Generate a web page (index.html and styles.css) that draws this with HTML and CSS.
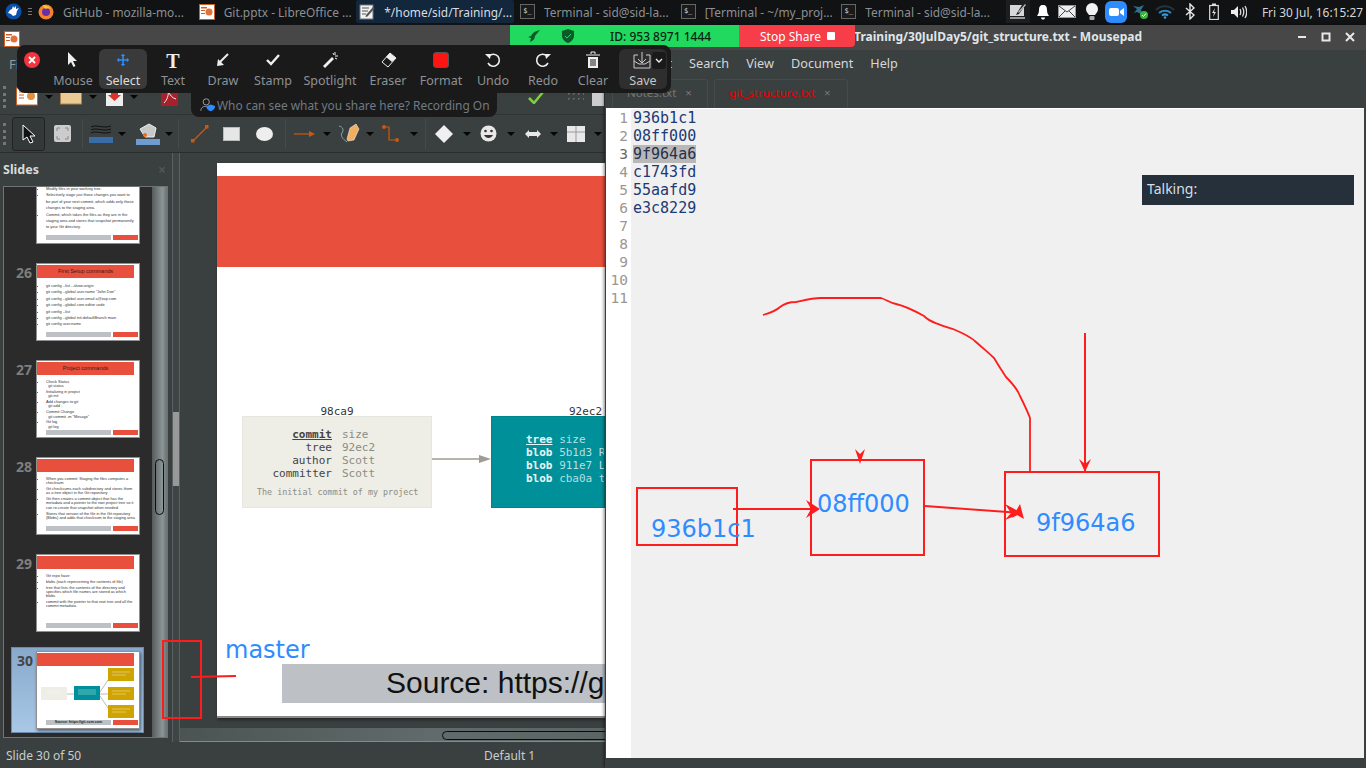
FILE: index.html
```html
<!DOCTYPE html>
<html lang="en">
<head>
  <meta charset="UTF-8">
  <title>Desktop - Git training</title>
  <link rel="stylesheet" href="styles.css">
</head>
<body>
<div class="desktop">

  <!-- top panel -->
  <div class="panel">
    <svg class="start" width="17" height="17" viewBox="0 0 17 17"><circle cx="8.5" cy="8.5" r="8" fill="#0b4fa8"/><path d="M3 10l2-3 2-1 1-3 1 2 2-2 0 3 3-1-2 3-1 4-3 1-2-2z" fill="#fff"/></svg>
    <div class="dots"><i></i><i></i><i></i></div>
    <div class="task">
      <svg width="16" height="17" viewBox="0 0 16 17"><circle cx="8" cy="9" r="7.5" fill="#f5822a"/><circle cx="8" cy="9" r="4" fill="#6a2fa8"/><path d="M5 2c3 0 6 1 8 4-2-1-4-1-5 0-2-1-3-2-3-4z" fill="#fcc32c"/></svg>
      <span>GitHub - mozilla-mo...</span>
    </div>
    <div class="task">
      <svg width="16" height="16" viewBox="0 0 16 16"><rect x="0.5" y="0.5" width="15" height="15" fill="#fff" stroke="#c9602a"/><rect x="2" y="3" width="6" height="1.5" fill="#c9602a"/><rect x="2" y="6" width="4" height="1" fill="#c9602a"/><rect x="2" y="9" width="4" height="1" fill="#c9602a"/><circle cx="10" cy="8" r="3.5" fill="#e2703a"/></svg>
      <span>Git.pptx - LibreOffice ...</span>
    </div>
    <div class="task task-active">
      <svg width="16" height="16" viewBox="0 0 16 16"><rect x="1" y="1" width="13" height="14" fill="#f2f2f2" stroke="#777"/><path d="M3 4h7M3 7h6M3 10h4" stroke="#555"/><path d="M7 11l7-8 1.500 1.500-7 8-2 .5z" fill="#555"/></svg>
      <span>*/home/sid/Training/...</span>
    </div>
    <div class="task"><span class="term-icon">$_</span><span>Terminal - sid@sid-la...</span></div>
    <div class="task"><span class="term-icon">$_</span><span>[Terminal - ~/my_proj...</span></div>
    <div class="task"><span class="term-icon">$_</span><span>Terminal - sid@sid-la...</span></div>
    <div class="tray">
      <div class="tray-item tray-notes"><svg width="18" height="17" viewBox="0 0 18 17"><path d="M1 2h12l-5 8-1 2 3-1 5-7v9H1z" fill="#d8d8d8"/><path d="M9 9l7-8 1 1-7 8z" fill="#bbb"/><rect x="1" y="14" width="15" height="2" fill="#999"/></svg></div>
      <div class="tray-item"><svg width="14" height="16" viewBox="0 0 14 16"><path d="M7 1c3 0 4 2 4 5 0 3 1 4 2 6H1c1-2 2-3 2-6 0-3 1-5 4-5z" fill="#fff"/><path d="M5 13.500h4c0 1.500-1 2-2 2s-2-.5-2-2z" fill="#fff"/></svg></div>
      <div class="tray-item"><svg width="18" height="13" viewBox="0 0 18 13"><rect x="0.500" y="0.500" width="17" height="12" fill="#eee" stroke="#999"/><path d="M1 1l8 6 8-6M1 12l6-6M17 12l-6-6" fill="none" stroke="#444"/></svg></div>
      <div class="tray-item"><svg width="14" height="19" viewBox="0 0 14 19"><path d="M7 1a6 6 0 0 1 6 6c0 3-2 4-3 6H4c-1-2-3-3-3-6a6 6 0 0 1 6-6z" fill="#f2f2f2"/><rect x="4.500" y="14" width="5" height="4" rx="1" fill="#aaa"/></svg></div>
      <div class="tray-item"><svg width="22" height="22" viewBox="0 0 22 22"><rect width="22" height="22" rx="6" fill="#2d8cff"/><rect x="4" y="7" width="10" height="8" rx="2" fill="#fff"/><path d="M15 10l4-3v8l-4-3z" fill="#fff"/></svg></div>
      <div class="tray-item"><svg width="17" height="16" viewBox="0 0 17 16"><path d="M1 2l6 1 5-2-3 5 2 5-6-3-3 1 3-4z" fill="#2f6f8f"/><circle cx="12" cy="11" r="4" fill="#3cb53c"/><path d="M10 11l1.500 1.500L14 9.500" stroke="#fff" fill="none"/></svg></div>
      <div class="tray-item"><svg width="20" height="14" viewBox="0 0 20 14"><path d="M1 5c5-5 13-5 18 0" stroke="#27333b" stroke-width="2" fill="none"/><path d="M4 8c3.500-3 8.500-3 12 0" stroke="#2f87c0" stroke-width="2" fill="none"/><path d="M7 10.500c2-1.500 4-1.500 6 0" stroke="#3a9ad6" stroke-width="2" fill="none"/><circle cx="10" cy="12.500" r="1.300" fill="#3a9ad6"/></svg></div>
      <div class="tray-item"><svg width="10" height="17" viewBox="0 0 10 17"><path d="M1 5l8 7-4 4V1l4 4-8 7" stroke="#e8e8e8" stroke-width="1.400" fill="none"/></svg></div>
      <div class="tray-item"><svg width="10" height="17" viewBox="0 0 10 17"><rect x="0.700" y="2.500" width="8.600" height="14" fill="none" stroke="#ddd" stroke-width="1.200"/><rect x="3" y="0.500" width="4" height="2" fill="#ddd"/><path d="M6 5l-3 5h2l-1 4 3-5H5z" fill="#ddd"/></svg></div>
      <div class="tray-item"><svg width="16" height="14" viewBox="0 0 16 14"><path d="M0 5h3l4-4v12l-4-4H0z" fill="#eee"/><path d="M9 4c1 2 1 4 0 6M11.500 2.500c1.700 3 1.700 6 0 9M14 1c2.300 4 2.300 8 0 12" stroke="#ddd" stroke-width="1.300" fill="none"/></svg></div>
    </div>
    <div class="clock">Fri 30 Jul, 16:15:27</div>
  </div>

  <!-- impress window -->
  <div class="window impress">
    <div class="titlebar">
      <svg class="app-icon" width="16" height="16" viewBox="0 0 16 16"><rect x="0.500" y="0.500" width="15" height="15" fill="#fff" stroke="#c9602a"/><rect x="2" y="3" width="6" height="1.500" fill="#c9602a"/><rect x="2" y="6" width="4" height="1" fill="#c9602a"/><rect x="2" y="9" width="4" height="1" fill="#c9602a"/><circle cx="10" cy="8" r="3.500" fill="#e2703a"/></svg>
    </div>
    <div class="menubar"><span>File</span></div>
    <div class="toolbar toolbar-top">
      <span class="grip"></span>
      <svg class="ic-new" width="22" height="20" viewBox="0 0 22 20"><rect x="0.500" y="1" width="21" height="17" fill="#fff" stroke="#c9602a"/><circle cx="15" cy="9" r="4" fill="#e2903a"/><path d="M3 5h7M3 8h5M3 11h5" stroke="#c9602a"/></svg><b class="drop"></b>
      <svg width="22" height="16" viewBox="0 0 22 16"><rect x="0.500" y="1" width="21" height="14" fill="#ecca94" stroke="#a98250"/></svg><b class="drop"></b>
      <svg class="ic-save" width="17" height="18" viewBox="0 0 17 18"><rect width="17" height="18" fill="#eee"/><path d="M5 2h7v5h3l-6.500 6L2 7h3z" fill="#d8342c"/></svg><b class="drop"></b>
      <svg class="ic-pdf" width="17" height="18" viewBox="0 0 17 18"><rect width="17" height="18" fill="#a8202c"/><path d="M3 15c3-3 5-8 4-12 2 4 4 7 8 8" stroke="#eee" fill="none"/></svg>
      <svg class="ic-check" width="16" height="13" viewBox="0 0 16 13"><path d="M1 7l5 5 9-11" stroke="#7fd040" stroke-width="2.500" fill="none"/></svg>
      <span class="dot-grid"></span>
      <span class="doc-icon"></span>
    </div>
    <div class="toolbar toolbar-draw">
      <span class="grip"></span>
      <span class="tool-on"><svg width="14" height="20" viewBox="0 0 14 20"><path d="M1 1v15l4-3 3 6 3-1-3-6h5z" fill="#111" stroke="#fff"/></svg></span>
      <svg class="snap" width="17" height="17" viewBox="0 0 17 17"><rect width="17" height="17" rx="2" fill="#ccc"/><path d="M3 6V3h3M11 3h3v3M14 11v3h-3M6 14H3v-3" stroke="#888" fill="none"/></svg>
      <span class="sep"></span>
      <span class="color-btn ic-lines"><svg width="24" height="12" viewBox="0 0 24 12"><path d="M2 3c6-3 12 2 20-1M2 6c6-3 12 2 20-1M2 9c6-3 12 2 20-1" stroke="#111" fill="none"/></svg><i class="bar-line"></i></span><b class="drop"></b>
      <span class="color-btn"><svg width="22" height="15" viewBox="0 0 22 15"><path d="M3 6l9-5 7 4-2 9H8z" fill="#c8c8c8" stroke="#eee"/><circle cx="8" cy="12" r="2" fill="#e07020"/></svg><i class="bar-fill"></i></span><b class="drop"></b>
      <span class="sep"></span>
      <svg class="ic-line" width="18" height="18" viewBox="0 0 18 18"><path d="M2 16L16 2" stroke="#c85a10" stroke-width="1.200"/><rect y="14" width="3.500" height="3.500" fill="#c85a10"/><rect x="14" width="3.500" height="3.500" fill="#c85a10"/></svg>
      <span class="shape-rect"></span>
      <span class="shape-ellipse"></span>
      <span class="sep"></span>
      <svg class="ic-arrow" width="22" height="6" viewBox="0 0 22 6"><path d="M0 3h16" stroke="#c85a10" stroke-width="1.200"/><path d="M15 0l6 3-6 3z" fill="#c85a10"/></svg><b class="drop"></b>
      <svg class="ic-curve" width="24" height="22" viewBox="0 0 24 22"><path d="M2 3c4 1 5 4 3 7s1 6 5 9" stroke="#8aa" fill="none"/><path d="M10 16l3-11 6-4 3 5-5 11-6 1z" fill="#f0b060" stroke="#fff" stroke-width=".5"/></svg><b class="drop"></b>
      <svg class="ic-conn" width="17" height="17" viewBox="0 0 17 17"><path d="M2 2h5v13h8" stroke="#c85a10" stroke-width="1.200" fill="none"/><circle cx="2" cy="2" r="2" fill="#c85a10"/><circle cx="15" cy="15" r="2" fill="#c85a10"/></svg><b class="drop"></b>
      <span class="sep"></span>
      <svg class="ic-diamond" width="18" height="18" viewBox="0 0 18 18"><path d="M9 0l9 9-9 9-9-9z" fill="#f0f0f0"/></svg><b class="drop"></b>
      <svg class="ic-smile" width="17" height="17" viewBox="0 0 17 17"><circle cx="8.500" cy="8.500" r="8" fill="#e8e8e8"/><circle cx="5.500" cy="6" r="1.300" fill="#333"/><circle cx="11.500" cy="6" r="1.300" fill="#333"/><path d="M4 10c2 4 7 4 9 0z" fill="#333"/></svg><b class="drop"></b>
      <svg class="ic-arrows" width="16" height="10" viewBox="0 0 16 10"><path d="M0 5l4-4v2h8V1l4 4-4 4V7H4v2z" fill="#e8e8e8"/></svg><b class="drop"></b>
      <svg class="ic-grid" width="18" height="16" viewBox="0 0 18 16"><rect width="18" height="16" fill="#e8e8e8"/><path d="M9 0v16M0 6h18" stroke="#999"/></svg><b class="drop"></b>
    </div>
    <div class="workspace">
      <div class="sidebar">
        <div class="sidebar-head"><span>Slides</span><em>×</em></div>
        <div class="slide-list">
          <div class="thumbs">
            <div class="thumb-row thumb-first">
              <span class="thumb-num"></span>
              <div class="thumb">
                <div class="thumb-head"></div>
                <ul class="thumb-text">
                  <li>Modify files in your working tree.</li>
                  <li>Selectively stage just those changes you want to be part of your next commit, which adds only those changes to the staging area.</li>
                  <li>Commit, which takes the files as they are in the staging area and stores that snapshot permanently to your Git directory.</li>
                </ul>
                <div class="thumb-foot"><i></i><i></i></div>
              </div>
            </div>
            <div class="thumb-row">
              <span class="thumb-num">26</span>
              <div class="thumb">
                <div class="thumb-head">First Setup commands</div>
                <ul class="thumb-text">
                  <li>git config --list --show-origin</li>
                  <li>git config --global user.name "John Doe"</li>
                  <li>git config --global user.email a@exp.com</li>
                  <li>git config --global core.editor code</li>
                  <li>git config --list</li>
                  <li>git config --global init.defaultBranch main</li>
                  <li>git config user.name</li>
                </ul>
                <div class="thumb-foot"><i></i><i></i></div>
              </div>
            </div>
            <div class="thumb-row">
              <span class="thumb-num">27</span>
              <div class="thumb">
                <div class="thumb-head">Project commands</div>
                <ul class="thumb-text thumb-tight">
                  <li>Check Status<br>&nbsp;&nbsp;git status</li>
                  <li>Initializing in project<br>&nbsp;&nbsp;git init</li>
                  <li>Add changes to git<br>&nbsp;&nbsp;git add .</li>
                  <li>Commit Change<br>&nbsp;&nbsp;git commit -m "Mesage"</li>
                  <li>Git log<br>&nbsp;&nbsp;git log</li>
                </ul>
                <div class="thumb-foot"><i></i><i></i></div>
              </div>
            </div>
            <div class="thumb-row">
              <span class="thumb-num">28</span>
              <div class="thumb">
                <div class="thumb-head"></div>
                <ul class="thumb-text thumb-tight">
                  <li>When you commit: Staging the files computes a checksum</li>
                  <li>Git checksums each subdirectory and stores them as a tree object in the Git repository</li>
                  <li>Git then creates a commit object that has the metadata and a pointer to the root project tree so it can re-create that snapshot when needed.</li>
                  <li>Stores that version of the file in the Git repository (Blobs) and adds that checksum to the staging area</li>
                </ul>
                <div class="thumb-foot"><i></i><i></i></div>
              </div>
            </div>
            <div class="thumb-row">
              <span class="thumb-num">29</span>
              <div class="thumb">
                <div class="thumb-head"></div>
                <ul class="thumb-text thumb-tight">
                  <li>Git repo have:</li>
                  <li>blobs (each representing the contents of file)</li>
                  <li>tree that lists the contents of the directory and specifies which file names are stored as which blobs</li>
                  <li>commit with the pointer to that root tree and all the commit metadata.</li>
                </ul>
                <div class="thumb-foot"><i></i><i></i></div>
              </div>
            </div>
            <div class="thumb-row thumb-current">
              <span class="thumb-num">30</span>
              <div class="thumb">
                <div class="thumb-head"></div>
                <svg class="mini" width="102" height="52" viewBox="0 0 102 52">
                  <path d="M30 26h7M63 24l8-12M63 26h8M63 28l8 12" stroke="#bbb" fill="none"/>
                  <rect x="4" y="19" width="26" height="13" fill="#eeede6"/>
                  <rect x="37" y="18" width="26" height="14" fill="#009099"/>
                  <rect x="71" y="0" width="26" height="13" fill="#cfa300"/>
                  <rect x="71" y="19" width="26" height="13" fill="#cfa300"/>
                  <rect x="71" y="37" width="26" height="13" fill="#cfa300"/>
                  <path d="M10 23h14M10 25h12M41 22h18M41 24h18M41 26h18M75 4h18M75 7h14M75 23h18M75 26h14M75 41h18M75 44h14" stroke="#fff" stroke-opacity=".5" stroke-width=".8"/>
                </svg>
                <div class="thumb-foot"><i>Source: https://git-scm.com</i><i></i></div>
              </div>
            </div>
          </div>
          <div class="thumb-scroll"><span></span></div>
        </div>
      </div>
      <div class="splitter"><span></span></div>
      <div class="canvas-col">
        <div class="canvas">
          <div class="slide">
            <div class="slide-head"></div>
            <div class="diagram">
              <div class="node">
                <div class="node-id">98ca9</div>
                <div class="node-box commit">
                  <div class="kv"><b><u>commit</u></b><span>size</span></div>
                  <div class="kv"><b>tree</b><span>92ec2</span></div>
                  <div class="kv"><b>author</b><span>Scott</span></div>
                  <div class="kv"><b>committer</b><span>Scott</span></div>
                  <div class="commit-msg">The initial commit of my project</div>
                </div>
              </div>
              <svg class="link" width="59" height="10" viewBox="0 0 59 10"><path d="M0 5h48" stroke="#b8b3ab" stroke-width="2"/><path d="M47 1l12 4-12 4z" fill="#a09b93"/></svg>
              <div class="node">
                <div class="node-id node-id-tree">92ec2</div>
                <div class="node-box tree">
                  <div><b><u>tree</u></b> <span>size</span></div>
                  <div><b>blob</b> <span>5b1d3 R</span></div>
                  <div><b>blob</b> <span>911e7 L</span></div>
                  <div><b>blob</b> <span>cba0a t</span></div>
                </div>
              </div>
            </div>
            <div class="slide-foot">Source: https://g</div>
          </div>
        </div>
        <div class="hscroll"><span></span></div>
      </div>
    </div>
    <div class="statusbar"><span class="status-page">Slide 30 of 50</span><span>Default 1</span></div>
  </div>

  <!-- mousepad window -->
  <div class="window mousepad">
    <div class="titlebar mp-title">
      <strong>Training/30JulDay5/git_structure.txt - Mousepad</strong>
      <div class="win-btns">
        <svg width="12" height="12" viewBox="0 0 12 12"><path d="M2 6h8" stroke="#e8e8e8" stroke-width="2"/></svg>
        <svg width="12" height="12" viewBox="0 0 12 12"><rect x="2.500" y="2.500" width="7" height="7" fill="none" stroke="#e8e8e8" stroke-width="2"/></svg>
        <svg width="12" height="12" viewBox="0 0 12 12"><path d="M2 2l8 8M10 2l-8 8" stroke="#e8e8e8" stroke-width="2"/></svg>
      </div>
    </div>
    <div class="menubar mp-menu"><span>File</span><span>Edit</span><span>Search</span><span>View</span><span>Document</span><span>Help</span></div>
    <div class="tabs">
      <div class="tab tab-notes">Notes.txt <em>×</em></div>
      <div class="tab tab-active">git_structure.txt <em>×</em></div>
    </div>
    <div class="editor">
      <div class="gutter"><div>1</div><div>2</div><div class="gutter-on">3</div><div>4</div><div>5</div><div>6</div><div>7</div><div>8</div><div>9</div><div>10</div><div>11</div></div>
      <div class="code">
        <div>936b1c1</div>
        <div>08ff000</div>
        <div><span class="hit">9f964a6</span></div>
        <div>c1743fd</div>
        <div>55aafd9</div>
        <div>e3c8229</div>
      </div>
    </div>
    <div class="mp-status"></div>
  </div>

  <!-- zoom overlays -->
  <div class="meeting-bar">
    <div class="meeting-id">
      <svg width="14" height="12" viewBox="0 0 14 12"><path d="M13 0C8 1 5 3 4 6L1 7l3 1-1 4c3-1 5-3 5-6z" fill="#0c5a2a"/></svg>
      <svg width="12" height="14" viewBox="0 0 12 14"><path d="M6 0l6 2v5c0 3-3 6-6 7-3-1-6-4-6-7V2z" fill="#0c5a2a"/><path d="M3 7l2 2 4-4" stroke="#21d95f" fill="none"/></svg>
      <span>ID: 953 8971 1444</span>
    </div>
    <div class="stop-share">Stop Share <i></i></div>
  </div>

  <div class="zoom-note">
    <svg width="16" height="16" viewBox="0 0 18 17"><circle cx="7" cy="5" r="3.500" fill="none" stroke="#aaa"/><path d="M1 15c0-4 3-5 6-5" fill="none" stroke="#aaa"/><path d="M12 8l5 1.500c0 3-2 5-5 6-3-1-5-3-5-6z" fill="#2d8cff"/></svg>
    <span>Who can see what you share here? Recording On</span>
  </div>
  <div class="zoom-tools">
    <svg class="zoom-close" width="16" height="16" viewBox="0 0 16 16"><circle cx="8" cy="8" r="8" fill="#f0353f"/><path d="M5 5l6 6M11 5l-6 6" stroke="#fff" stroke-width="1.800"/></svg>
    <div class="tool"><svg width="16" height="18" viewBox="0 0 16 18"><path d="M3 1v13l3-3 2.500 5 2-1-2.500-5h4z" fill="#eee"/></svg><span>Mouse</span></div>
    <div class="tool tool-on-dark"><svg width="14" height="18" viewBox="0 0 18 18"><path d="M9 1l3 3h-2v4h4V6l3 3-3 3v-2h-4v4h2l-3 3-3-3h2v-4H4v2L1 9l3-3v2h4V4H6z" fill="#2d8cff"/></svg><span>Select</span></div>
    <div class="tool"><strong class="tool-t">T</strong><span>Text</span></div>
    <div class="tool"><svg width="18" height="18" viewBox="0 0 18 18"><path d="M14 3L6 11" stroke="#eee" stroke-width="2"/><path d="M3 15l1-7 6 6z" fill="#eee"/></svg><span>Draw</span></div>
    <div class="tool"><svg width="18" height="18" viewBox="0 0 18 18"><path d="M3 9l4 4 8-9" stroke="#eee" stroke-width="2.400" fill="none"/></svg><span>Stamp</span></div>
    <div class="tool tool-spot"><svg width="18" height="18" viewBox="0 0 18 18"><path d="M2 15L11 6l2 2-9 9z" fill="#eee"/><path d="M14 1v3M17 5h-3M12 2l1 2M16 8l-2-1" stroke="#eee"/></svg><span>Spotlight</span></div>
    <div class="tool tool-erase"><svg width="18" height="18" viewBox="0 0 18 18"><path d="M11 2l6 5-8 9-6-5z" fill="#1a1a1a" stroke="#eee"/><path d="M11 2l6 5-4 4-6-5z" fill="#eee"/></svg><span>Eraser</span></div>
    <div class="tool tool-format"><i class="swatch"></i><span>Format</span></div>
    <div class="tool"><svg width="18" height="18" viewBox="0 0 18 18"><path d="M5 5a6 6 0 1 1-1 7" stroke="#eee" stroke-width="1.600" fill="none"/><path d="M1 3l6 0-1 5z" fill="#eee"/></svg><span>Undo</span></div>
    <div class="tool"><svg width="18" height="18" viewBox="0 0 18 18"><path d="M13 5a6 6 0 1 0 1 7" stroke="#eee" stroke-width="1.600" fill="none"/><path d="M17 3l-6 0 1 5z" fill="#eee"/></svg><span>Redo</span></div>
    <div class="tool"><svg width="16" height="18" viewBox="0 0 16 18"><path d="M1 4h14M6 3V1h4v2" stroke="#eee" fill="none"/><path d="M3 6h10v11H3z" fill="#eee"/><path d="M6 8v7M8 8v7M10 8v7" stroke="#1a1a1a"/></svg><span>Clear</span></div>
    <div class="tool tool-save">
      <svg width="20" height="18" viewBox="0 0 20 18"><path d="M5 4H1v13h16V4h-4" stroke="#ccc" fill="none"/><path d="M9 1v10M5 8l4 4 4-4M1 10l5 3h6l5-3" stroke="#ccc" fill="none"/></svg>
      <span>Save</span>
      <b class="chev"><svg width="8" height="6" viewBox="0 0 8 6"><path d="M1 1l3 3 3-3" stroke="#eee" stroke-width="1.400" fill="none"/></svg></b>
    </div>
  </div>

  <div class="talking">Talking:</div>

  <!-- pen annotations drawn over the shared screen -->
  <svg class="ink" width="1366" height="768" viewBox="0 0 1366 768">
    <g fill="none" stroke="#ff1c1c" stroke-width="2">
      <rect x="637" y="488" width="100" height="57"/>
      <rect x="811" y="460" width="113" height="95"/>
      <rect x="1005" y="472" width="154" height="84"/>
      <rect x="163" y="641" width="38" height="77"/>
      <path d="M191 677L236 676"/>
      <path d="M733 509H818"/>
      <path d="M925 506L1020 513"/>
      <path d="M1085 333V472"/>
      <path stroke-width="1.800" d="M763 315C770 313 776 311 780 307C785 303 790 302 796 302C805 300 812 298 821 298L881 298C887 300 890 303 896 304C905 306 915 311 924 316C930 322 940 325 953 329C965 334 972 338 976 342C985 350 990 354 994 358C1000 368 1004 374 1006 377C1012 383 1017 388 1020 396C1024 404 1027 410 1030 418L1030 472"/>
    </g>
    <g fill="#ff1c1c">
      <path d="M806 500L820 509 806 518 811 509z"/>
      <path d="M1005 504L1022 513 1005 520 1011 513z"/>
      <path d="M1020 504L1024 519 1017 515 1012 518z"/>
      <path d="M1079 459L1085 472 1091 459 1085 464z"/>
      <path d="M855 449L860 464 865 449 860 454z"/>
    </g>
    <g class="ink-text">
      <text x="225" y="658">master</text>
      <text x="651" y="537">936b1c1</text>
      <text x="817" y="512">08ff000</text>
      <text x="1036" y="531">9f964a6</text>
    </g>
  </svg>
</div>
</body>
</html>
```

FILE: styles.css
```css
* {
  box-sizing: border-box;
}
html, body {
  margin: 0;
  padding: 0;
  height: 100%;
  overflow: hidden;
}
body {
  font-family: "Noto Sans", sans-serif;
  font-size: 13px;
  background-color: #222;
}
.desktop {
  position: relative;
  width: 1366px;
  height: 768px;
  overflow: hidden;
}

/* top panel */
.panel {
  display: flex;
  align-items: center;
  height: 25px;
  padding-bottom: 2px;
  background-color: #101213;
  color: #8b9094;
  font-size: 11.9px;
  white-space: nowrap;
}
.start {
  margin-left: 5px;
  flex: none;
}
.dots {
  display: flex;
  flex-direction: column;
  gap: 2px;
  margin-left: 6px;
  width: 7px;
  flex: none;
}
.dots i {
  display: block;
  width: 4px;
  height: 1px;
  background-color: #777;
}
.task {
  display: flex;
  align-items: center;
  gap: 9px;
  width: 160.67px;
  height: 23px;
  padding-left: 3px;
  overflow: hidden;
  flex: none;
}
.task svg {
  flex: none;
}
.task-active {
  width: 158px;
  margin-right: 2.67px;
  background-color: #12263c;
  border-radius: 2px;
  color: #d8dde2;
}
.term-icon {
  width: 15px;
  height: 15px;
  border: 1px solid #666;
  background-color: #1a1a1a;
  color: #ddd;
  font-family: "DejaVu Sans Mono", monospace;
  font-size: 7px;
  line-height: 13px;
  text-align: center;
  flex: none;
}
.tray {
  display: flex;
  margin-left: 7px;
  flex: none;
}
.tray-item {
  display: flex;
  align-items: center;
  justify-content: center;
  width: 24.5px;
  height: 23px;
}
.tray-notes {
  background-color: #1c1e1f;
}
.clock {
  margin-left: 11px;
  color: #d5d8da;
  flex: none;
}

/* windows */
.window {
  position: absolute;
  top: 25px;
  height: 743px;
  display: flex;
  flex-direction: column;
  background-color: #3a3f3f;
  overflow: hidden;
}
.impress {
  left: 0;
  width: 606px;
}
.mousepad {
  left: 605px;
  width: 761px;
  box-shadow: -1px 0 3px rgba(0, 0, 0, 0.5);
}
.titlebar {
  display: flex;
  align-items: center;
  height: 22px;
  background-color: #474747;
  flex: none;
}
.app-icon {
  margin-left: 4px;
  margin-top: 6px;
}
.menubar {
  display: flex;
  align-items: center;
  height: 33px;
  padding-left: 9px;
  color: #8d9ca3;
  flex: none;
}
.toolbar {
  display: flex;
  align-items: center;
  flex: none;
}
.toolbar svg {
  flex: none;
}
.toolbar-top {
  height: 35px;
  border-bottom: 1px solid #2f3333;
}
.toolbar-draw {
  height: 38px;
  border-bottom: 1px solid #2a2d2d;
}
.grip {
  width: 3px;
  height: 22px;
  margin: 0 6px 0 3px;
  border-left: 3px dotted #777;
}
.drop {
  width: 0;
  height: 0;
  margin: 0 5px;
  border-left: 4px solid transparent;
  border-right: 4px solid transparent;
  border-top: 4px solid #050505;
}
.toolbar-top .drop {
  margin: 0 7px;
}
.ic-new {
  margin-left: 4px;
}
.ic-save {
  margin-left: 2px;
}
.ic-pdf {
  margin-left: 16px;
}
.ic-check {
  margin-left: 350px;
}
.dot-grid {
  width: 18px;
  height: 12px;
  margin-left: 22px;
  background-image: radial-gradient(#666 1px, transparent 1px);
  background-size: 5px 5px;
}
.doc-icon {
  width: 12px;
  height: 18px;
  margin-left: 8px;
  background-color: #ccc;
}
.tool-on {
  display: flex;
  align-items: center;
  justify-content: center;
  width: 33px;
  height: 34px;
  border: 1px solid #222;
  border-radius: 3px;
  background-color: #333838;
  flex: none;
}
.snap {
  margin: 0 11px 0 9px;
}
.sep {
  width: 1px;
  height: 30px;
  margin-right: 2px;
  background-color: #454a4a;
  flex: none;
}
.color-btn {
  display: flex;
  flex-direction: column;
  align-items: center;
  width: 24px;
  margin-left: 5px;
  flex: none;
}
.ic-lines {
  margin-left: 4px;
}
.bar-line,
.bar-fill {
  display: block;
  width: 24px;
  height: 6px;
  margin-top: 1px;
}
.bar-line {
  background-color: #3a6ca8;
}
.bar-fill {
  background-color: #6f9bd1;
}
.ic-line {
  margin-left: 10px;
}
.shape-rect {
  width: 17px;
  height: 14px;
  margin-left: 14px;
  background-color: #e6e6e6;
  border: 1px solid #bbb;
  flex: none;
}
.shape-ellipse {
  width: 17px;
  height: 14px;
  margin-left: 16px;
  margin-right: 12px;
  border-radius: 50%;
  background-color: #eee;
  flex: none;
}
.ic-arrow {
  margin: 0 2px 0 6px;
}
.ic-curve {
  margin-left: 1px;
}
.ic-conn {
  margin: 0 6px 0 3px;
}
.ic-conn + .drop + .sep {
  margin-left: 2px;
}
.ic-diamond {
  margin: 0 5px 0 7px;
}
.ic-smile {
  margin: 0 5px 0 4px;
}
.ic-arrows {
  margin: 0 4px 0 5px;
}
.ic-grid {
  margin: 0 4px;
}

/* impress workspace */
.workspace {
  display: flex;
  height: 589px;
  flex: none;
}
.sidebar {
  display: flex;
  flex-direction: column;
  width: 172px;
  flex: none;
}
.sidebar-head {
  display: flex;
  justify-content: space-between;
  align-items: center;
  height: 33px;
  padding: 0 6px 0 3px;
  color: #d6dadb;
  font-size: 12.5px;
  font-weight: 700;
  flex: none;
}
.sidebar-head em {
  color: #505656;
  font-style: normal;
  font-size: 14px;
}
.slide-list {
  display: flex;
  height: 552px;
  width: 165px;
  margin-left: 3px;
  border: 1px solid #6e7474;
  overflow: hidden;
}
.thumbs {
  width: 148px;
  background-color: #2b2b2b;
  flex: none;
}
.thumb-row {
  display: flex;
  align-items: flex-start;
  width: 133px;
  height: 86px;
  margin: 0 0 11px 7px;
  padding: 4px 4px 4px 0;
}
.thumb-first {
  margin-top: -25px;
}
.thumb-current {
  background: linear-gradient(#88a9cc, #a9c8e6);
  border: 1px solid #6c8cae;
  padding: 3px 3px 3px 0;
}
.thumb-num {
  width: 21px;
  padding-top: 1px;
  margin-right: 4px;
  color: #7e7e7e;
  font-size: 14px;
  font-weight: 700;
  text-align: right;
  line-height: 18px;
  flex: none;
}
.thumb-current .thumb-num {
  color: #444;
  margin-right: 3px;
}
.thumb {
  display: flex;
  flex-direction: column;
  width: 104px;
  height: 78px;
  padding-top: 1px;
  background-color: #fff;
  border: 1px solid #8f8f8f;
  overflow: hidden;
  flex: none;
}
.thumb-current .thumb {
  box-shadow: 1px 2px 3px rgba(0, 0, 0, 0.5);
}
.thumb-head {
  height: 13px;
  margin-right: 5px;
  background-color: #e94f3d;
  color: #3a1a16;
  font-family: "Liberation Sans", sans-serif;
  font-size: 5.5px;
  line-height: 13px;
  text-align: center;
  flex: none;
}
.thumb-text {
  margin: 5px 4px 0 5px;
  padding: 0 0 0 4px;
  color: #333;
  font-family: "Liberation Sans", sans-serif;
  font-size: 3.9px;
  line-height: 6.4px;
}
.thumb-tight {
  line-height: 4.3px;
}
.thumb-tight li {
  margin-bottom: 1.500px;
}
.thumb-foot {
  display: flex;
  gap: 2px;
  height: 5px;
  margin: auto 1px 3px 9px;
  flex: none;
}
.thumb-foot i {
  display: block;
  width: 25px;
  background-color: #e94f3d;
}
.thumb-foot i:first-child {
  width: 65px;
  background-color: #bdc1c5;
  color: #222;
  font-family: "Liberation Sans", sans-serif;
  font-size: 3.6px;
  font-style: normal;
  font-weight: 700;
  line-height: 5px;
  text-align: center;
}
.mini {
  margin-top: 2px;
  flex: none;
}
.thumb-scroll {
  flex: 1;
  background: linear-gradient(90deg, #555b5b, #8c9595 70%, #6a7171);
}
.thumb-scroll span {
  display: block;
  width: 9px;
  height: 56px;
  margin: 272px 0 0 3px;
  border: 1.500px solid #0c0c0c;
  border-radius: 5px;
}
.splitter {
  width: 8px;
  background-color: #3f4444;
  border-left: 1px solid #5a6060;
  border-right: 1px solid #5a6060;
  flex: none;
}
.splitter span {
  display: block;
  height: 74px;
  margin-top: 259px;
  background-color: #999;
}
.canvas-col {
  display: flex;
  flex-direction: column;
  flex: 1;
  min-width: 0;
}
.canvas {
  height: 575px;
  padding: 10px 0 0 37px;
  overflow: hidden;
  flex: none;
}
.slide {
  display: flex;
  flex-direction: column;
  width: 760px;
  height: 555px;
  padding-top: 13px;
  background-color: #fff;
  border-bottom: 2px solid #8a8a8a;
  box-shadow: 1px 2px 3px rgba(0, 0, 0, 0.4);
}
.slide-head {
  height: 91px;
  background-color: #e94f3d;
  flex: none;
}
.diagram {
  display: flex;
  align-items: flex-end;
  margin: 137px 0 0 25px;
  color: #333;
  font-family: "DejaVu Sans Mono", monospace;
  font-size: 11px;
  line-height: 13px;
  white-space: nowrap;
}
.node {
  display: flex;
  flex-direction: column;
}
.node-id {
  height: 12px;
  line-height: 15px;
  text-align: center;
}
.node-id-tree {
  width: 114px;
  padding-left: 78px;
  text-align: left;
}
.node-box {
  height: 92px;
  border: 1px solid #e6e6e0;
}
.commit {
  width: 190px;
  padding-top: 11px;
  background-color: #eeede6;
}
.kv {
  display: flex;
  gap: 10px;
}
.kv b {
  width: 89px;
  text-align: right;
  color: #444;
  font-weight: 700;
}
.kv:nth-child(n+2) b {
  font-weight: 400;
}
.kv span,
.commit-msg {
  color: #8c8c84;
}
.commit-msg {
  margin: 6px 0 0 14px;
  font-size: 8.4px;
}
.link {
  margin-bottom: 44px;
  flex: none;
}
.tree {
  width: 114px;
  padding: 16px 0 0 34px;
  background-color: #009099;
  border-color: #00848c;
  color: #b7dfe1;
  overflow: hidden;
}
.tree b {
  color: #eaf6f6;
}
.slide-foot {
  height: 39px;
  margin: auto 0 13px 65px;
  padding-left: 104px;
  background-color: #bdc1c5;
  color: #111;
  font-family: "Liberation Sans", sans-serif;
  font-size: 30px;
  line-height: 37px;
  white-space: nowrap;
}
.hscroll {
  flex: 1;
  background: linear-gradient(90deg, #4c5353, #626b6b 60%, #5c6464);
  border-bottom: 1px solid #888;
}
.hscroll span {
  display: block;
  width: 300px;
  height: 9px;
  margin: 3px 0 0 262px;
  border: 1.500px solid #0c0c0c;
  border-radius: 5px;
}
.statusbar {
  display: flex;
  align-items: center;
  flex: 1;
  padding-left: 6px;
  color: #c8cdce;
  font-size: 12px;
}
.status-page {
  width: 478px;
}

/* mousepad */
.mp-title {
  height: 25px;
  padding-bottom: 2px;
  position: relative;
  background-color: #474747;
  color: #dfe6ea;
  font-size: 12px;
  white-space: nowrap;
}
.mp-title strong {
  margin-left: auto;
  margin-right: 224px;
}
.win-btns {
  position: absolute;
  right: 10px;
  top: 6px;
  display: flex;
  gap: 12px;
}
.mp-menu {
  height: 26px;
  padding-left: 7px;
  gap: 17px;
  color: #d2d8db;
  font-size: 12.7px;
}
.tabs {
  display: flex;
  align-items: flex-end;
  gap: 6px;
  height: 32px;
  padding-left: 7px;
  font-size: 11.5px;
  flex: none;
}
.tab {
  height: 29px;
  padding-top: 5px;
  border: 1px solid #454a4a;
  border-bottom: none;
  border-radius: 3px 3px 0 0;
}
.tab em {
  font-style: normal;
  color: #777;
  margin-left: 6px;
}
.tab-notes {
  width: 96px;
  padding-left: 14px;
  color: #73797b;
}
.tab-active {
  width: 134px;
  padding-left: 14px;
  color: #e60000;
}
.editor {
  display: flex;
  height: 650px;
  margin-left: 1px;
  margin-right: 2px;
  padding-top: 1px;
  background-color: #fff;
  font-family: "DejaVu Sans Mono", monospace;
  font-size: 15px;
  line-height: 18px;
  flex: none;
}
.gutter {
  width: 25px;
  padding-right: 3px;
  background-color: #fff;
  color: #9c9691;
  text-align: right;
  font-size: 14.5px;
}
.gutter-on {
  color: #666;
}
.code {
  flex: 1;
  padding-left: 2px;
  background-color: #f0f0f0;
  color: #1d3a74;
}
.hit {
  display: inline-block;
  background-color: #b8b8b8;
  color: #26304a;
}
.mp-status {
  flex: 1;
  background-color: #3a3f3f;
}

/* zoom overlays */
.meeting-bar {
  position: absolute;
  left: 510px;
  top: 25px;
  display: flex;
  height: 22px;
  font-size: 12px;
  white-space: nowrap;
}
.meeting-id {
  position: relative;
  display: flex;
  align-items: center;
  gap: 21px;
  width: 229px;
  padding-left: 17px;
  background-color: #21d95f;
  color: #0b2414;
  font-weight: 500;
}
.meeting-id svg {
  flex: none;
}
.meeting-id span {
  margin-left: 15px;
}
.stop-share {
  display: flex;
  align-items: center;
  gap: 6px;
  width: 116px;
  padding-left: 21px;
  background-color: #f63d48;
  border-radius: 0 0 4px 0;
  color: #fff;
}
.stop-share i {
  display: block;
  width: 8px;
  height: 8px;
  background-color: #fff;
  border-radius: 1px;
}
.zoom-note {
  position: absolute;
  left: 191px;
  top: 85px;
  display: flex;
  align-items: center;
  gap: 1px;
  width: 306px;
  height: 32px;
  padding: 8px 0 0 9px;
  background-color: #1a1a1a;
  border-radius: 0 0 8px 8px;
  color: #6f7b85;
  font-size: 11.9px;
  white-space: nowrap;
}
.zoom-note svg {
  flex: none;
}
.zoom-tools {
  position: absolute;
  left: 17px;
  top: 45px;
  display: flex;
  gap: 2px;
  width: 654px;
  height: 48px;
  padding: 4px 0 0 32px;
  background-color: #1a1a1a;
  border-radius: 8px;
}
.zoom-close {
  position: absolute;
  left: 7px;
  top: 7px;
}
.tool {
  position: relative;
  display: flex;
  flex-direction: column;
  align-items: center;
  width: 48px;
  height: 40px;
  padding-top: 2px;
  border-radius: 6px;
  color: #8e9194;
  font-size: 12.5px;
  line-height: 16px;
}
.tool svg {
  height: 18px;
  margin-bottom: 4px;
  flex: none;
}
.tool-on-dark {
  background-color: #3a3a3a;
  color: #dcdcdc;
}
.tool-t {
  height: 22px;
  color: #eee;
  font-family: "Liberation Serif", serif;
  font-size: 20px;
  line-height: 20px;
}
.tool-spot {
  width: 62px;
}
.tool-erase {
  width: 50px;
}
.tool-format {
  width: 52px;
}
.swatch {
  display: block;
  width: 16px;
  height: 16px;
  margin: 1px 0 5px;
  background-color: #ff1414;
  border: 1px solid #555;
  border-radius: 3px;
}
.tool-save {
  background-color: #2e2e2e;
  color: #c6c6c6;
}
.chev {
  position: absolute;
  right: 1px;
  top: 3px;
  display: flex;
  align-items: center;
  justify-content: center;
  width: 14px;
  height: 17px;
  background-color: #1a1a1a;
  border-radius: 3px;
}
.chev svg {
  height: 6px;
  margin: 0;
}
.talking {
  position: absolute;
  left: 1142px;
  top: 175px;
  width: 212px;
  height: 30px;
  padding-left: 5px;
  background-color: #25303b;
  color: #d4dee6;
  font-size: 14px;
  line-height: 27px;
}
.ink {
  position: absolute;
  left: 0;
  top: 0;
  pointer-events: none;
}
.ink-text {
  fill: #2e8cff;
  font-family: "DejaVu Sans", sans-serif;
  font-size: 24px;
}
```
